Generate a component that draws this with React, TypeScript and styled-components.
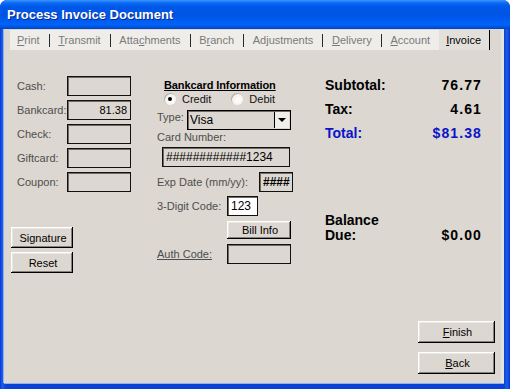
import React from 'react';
import styled, { createGlobalStyle } from 'styled-components';

const GlobalStyle = createGlobalStyle`
  html, body {
    margin: 0;
    padding: 0;
    background: #ffffff;
  }
  body {
    font-family: "Liberation Sans", Arial, sans-serif;
    font-size: 11px;
  }
`;

const FACE = '#dcd7d0';
const LABEL = '#4e4e4e';

const Window = styled.div`
  width: 510px;
  height: 389px;
  display: flex;
  flex-direction: column;
  background: linear-gradient(90deg, #0831d9 0px, #1d5fe6 2px, #0842d6 6px, #0842d6 504px, #1d5fe6 507px, #0831d9 510px);
  border-radius: 7px 7px 0 0;
  overflow: hidden;
`;

const TitleBar = styled.div`
  flex: none;
  height: 29px;
  display: flex;
  align-items: center;
  padding: 0 0 1px 7px;
  box-sizing: border-box;
  background: linear-gradient(
    180deg,
    #3d95ff 0%,
    #0a6cf5 10%,
    #0058e8 22%,
    #0054e3 50%,
    #005bf2 70%,
    #0063f8 85%,
    #0050d8 95%,
    #0040b8 100%
  );
  color: #ffffff;
  font: bold 13px "Liberation Sans", Arial, sans-serif;
  text-shadow: 1px 1px 0 #0a2a8a;
`;

const Client = styled.div`
  flex: 1;
  display: flex;
  flex-direction: column;
  margin: 0 6px 6px 4px;
  background: ${FACE};
  box-shadow: -1px 0 0 #8fb0ee, 0 1px 0 #8fb0ee, inset -3px 0 0 #e6e3de;
`;

const TabStrip = styled.div`
  flex: none;
  display: flex;
  width: 480px;
  height: 20px;
  margin: 1px 0 0 6px;
  background: #efede9;
`;

const Tab = styled.div<{ $first?: boolean }>`
  display: flex;
  align-items: center;
  padding: 0 9px 0 ${p => (p.$first ? '7px' : '9px')};
  color: #7a7a7a;
  font-size: 11px;
`;

const ActiveTab = styled.div`
  display: flex;
  align-items: center;
  padding: 0 8px 0 7px;
  background: #e3e0db;
  border-right: 1px solid #000000;
  color: #000000;
  font-size: 11px;
`;

const TabSep = styled.span`
  align-self: center;
  width: 1px;
  height: 13px;
  background: #2a2a2a;
`;

const Content = styled.div`
  flex: 1;
  display: flex;
  padding: 0 8px 9px 7px;
`;

const LeftCol = styled.div`
  width: 120px;
  display: flex;
  flex-direction: column;
`;

const PayList = styled.div`
  display: flex;
  flex-direction: column;
  gap: 4px;
  margin: 26px 0 0 6px;
`;

const Row = styled.div`
  display: flex;
  align-items: center;
`;

const Label = styled.span<{ $w?: number; $underline?: boolean }>`
  width: ${p => (p.$w ? `${p.$w}px` : 'auto')};
  flex: none;
  color: ${LABEL};
  font-size: 11px;
  text-decoration: ${p => (p.$underline ? 'underline' : 'none')};
`;

const Box = styled.div<{ $w: number; $h?: number; $white?: boolean; $right?: boolean; $bold?: boolean; $size?: number }>`
  width: ${p => p.$w}px;
  height: ${p => p.$h ?? 20}px;
  box-sizing: border-box;
  flex: none;
  display: flex;
  align-items: center;
  justify-content: ${p => (p.$right ? 'flex-end' : 'flex-start')};
  padding: 0 3px;
  border: 1px solid #111111;
  box-shadow: inset 1px 1px 0 #6e6b67;
  background: ${p => (p.$white ? '#ffffff' : 'transparent')};
  color: #000000;
  font-size: ${p => p.$size ?? 12}px;
  font-weight: ${p => (p.$bold ? 'bold' : 'normal')};
  white-space: nowrap;
  overflow: hidden;
`;

const Button = styled.button<{ $w: number; $h: number }>`
  width: ${p => p.$w}px;
  height: ${p => p.$h}px;
  flex: none;
  padding: 0 0 0 2px;
  border: none;
  background: ${FACE};
  box-shadow: inset -1px -1px 0 #000000, inset 1px 1px 0 #ffffff, inset -2px -2px 0 #85817b, inset 2px 2px 0 #ebe8e3;
  color: #000000;
  font: 11px "Liberation Sans", Arial, sans-serif;
  cursor: default;
`;

const ButtonStack = styled.div<{ $gap: number; $mt?: number }>`
  display: flex;
  flex-direction: column;
  gap: ${p => p.$gap}px;
  margin-top: ${p => p.$mt ?? 0}px;
`;

const MidCol = styled.div`
  width: 136px;
  margin-left: 26px;
  display: flex;
  flex-direction: column;
`;

const Heading = styled.div`
  margin: 28px 0 0 7px;
  height: 14px;
  line-height: 14px;
  font-size: 11px;
  font-weight: bold;
  text-decoration: underline;
  color: #000000;
  letter-spacing: -0.1px;
`;

const RadioRow = styled.div`
  display: flex;
  align-items: center;
  height: 14px;
  padding-left: 7px;
`;

const RadioOption = styled.label<{ $gap?: number }>`
  display: flex;
  align-items: center;
  gap: 6px;
  margin-left: ${p => p.$gap ?? 0}px;
  color: #111111;
  font-size: 11px;
`;

const RadioDot = styled.span<{ $checked?: boolean }>`
  width: 12px;
  height: 12px;
  border-radius: 50%;
  display: grid;
  place-items: center;
  background: radial-gradient(circle at 60% 60%, #ffffff 0%, #f4f2ee 55%, #dedad4 100%);
  box-shadow: inset 1px 1px 0 #b5b1aa;

  &::after {
    content: '';
    width: 4px;
    height: 4px;
    border-radius: 50%;
    background: ${p => (p.$checked ? '#000000' : 'transparent')};
  }
`;

const TypeRow = styled.div`
  display: flex;
  align-items: flex-start;
  margin-top: 4px;
`;

const TypeLabel = styled(Label)`
  padding-top: 1px;
`;

const Select = styled.div`
  width: 104px;
  height: 20px;
  box-sizing: border-box;
  display: flex;
  align-items: stretch;
  border: 1px solid #000000;
  box-shadow: inset 1px 1px 0 #6e6b67;
  color: #000000;
  font-size: 12px;
`;

const SelectValue = styled.span`
  flex: 1;
  display: flex;
  align-items: center;
  padding-left: 2px;
`;

const SelectArrow = styled.span`
  width: 14px;
  margin: 1px 1px 1px 0;
  display: grid;
  place-items: center;
  background: #f0eeea;
  border-left: 1px solid #000000;

  &::after {
    content: '';
    border-left: 4px solid transparent;
    border-right: 4px solid transparent;
    border-top: 4px solid #000000;
  }
`;

const FieldLabel = styled.div<{ $mt: number }>`
  margin-top: ${p => p.$mt}px;
  height: 13px;
  line-height: 13px;
  color: ${LABEL};
  font-size: 11px;
`;

const Field = styled.div<{ $mt: number; $ml?: number }>`
  display: flex;
  align-items: center;
  margin-top: ${p => p.$mt}px;
  margin-left: ${p => p.$ml ?? 0}px;
`;

const RightCol = styled.div`
  flex: 1;
  margin-left: 32px;
  display: flex;
  flex-direction: column;
`;

const Summary = styled.div`
  display: flex;
  flex-direction: column;
  gap: 8px;
  margin-top: 27px;
  padding-right: 15px;
`;

const SumRow = styled.div<{ $blue?: boolean }>`
  display: flex;
  justify-content: space-between;
  align-items: center;
  height: 16px;
  color: ${p => (p.$blue ? '#0a14c8' : '#000000')};
  font: bold 14px "Liberation Sans", Arial, sans-serif;
`;

const Amount = styled.span`
  letter-spacing: 1.1px;
  margin-right: -1px;
`;

const Balance = styled.div`
  margin-top: 72px;
  padding-right: 15px;
  display: flex;
  justify-content: space-between;
  align-items: flex-end;
  color: #000000;
  font: bold 14px/15px "Liberation Sans", Arial, sans-serif;
`;

const BalanceLabel = styled.div`
  display: flex;
  flex-direction: column;
`;

const NavButtons = styled(ButtonStack)`
  margin-top: auto;
  align-self: flex-end;
  margin-right: 1px;
`;

export default function App() {
  return (
    <>
      <GlobalStyle />
      <Window>
        <TitleBar>Process Invoice Document</TitleBar>
        <Client>
          <TabStrip>
            <Tab $first><span><u>P</u>rint</span></Tab>
            <TabSep />
            <Tab><span><u>T</u>ransmit</span></Tab>
            <TabSep />
            <Tab><span>Atta<u>c</u>hments</span></Tab>
            <TabSep />
            <Tab><span>B<u>r</u>anch</span></Tab>
            <TabSep />
            <Tab><span>Ad<u>j</u>ustments</span></Tab>
            <TabSep />
            <Tab><span><u>D</u>elivery</span></Tab>
            <TabSep />
            <Tab><span><u>A</u>ccount</span></Tab>
            <ActiveTab><span><u>I</u>nvoice</span></ActiveTab>
          </TabStrip>

          <Content>
            <LeftCol>
              <PayList>
                <Row><Label $w={50}>Cash:</Label><Box $w={64} /></Row>
                <Row><Label $w={50}>Bankcard:</Label><Box $w={64} $right $size={11}>81.38</Box></Row>
                <Row><Label $w={50}>Check:</Label><Box $w={64} /></Row>
                <Row><Label $w={50}>Giftcard:</Label><Box $w={64} /></Row>
                <Row><Label $w={50}>Coupon:</Label><Box $w={64} /></Row>
              </PayList>
              <ButtonStack $gap={4} $mt={35}>
                <Button $w={62} $h={21}>Signature</Button>
                <Button $w={62} $h={21}>Reset</Button>
              </ButtonStack>
            </LeftCol>

            <MidCol>
              <Heading>Bankcard Information</Heading>
              <RadioRow>
                <RadioOption><RadioDot $checked />Credit</RadioOption>
                <RadioOption $gap={20}><RadioDot />Debit</RadioOption>
              </RadioRow>
              <TypeRow>
                <TypeLabel $w={30}>Type:</TypeLabel>
                <Select>
                  <SelectValue>Visa</SelectValue>
                  <SelectArrow />
                </Select>
              </TypeRow>
              <FieldLabel $mt={1}>Card Number:</FieldLabel>
              <Field $mt={3} $ml={5}>
                <Box $w={128}>############1234</Box>
              </Field>
              <Field $mt={5}>
                <Label $w={102}>Exp Date (mm/yy):</Label>
                <Box $w={34} $bold>####</Box>
              </Field>
              <Field $mt={4}>
                <Label $w={70}>3-Digit Code:</Label>
                <Box $w={31} $white>123</Box>
              </Field>
              <Field $mt={5} $ml={70}>
                <Button $w={64} $h={18}>Bill Info</Button>
              </Field>
              <Field $mt={5}>
                <Label $w={70} $underline>Auth Code:</Label>
                <Box $w={64} />
              </Field>
            </MidCol>

            <RightCol>
              <Summary>
                <SumRow><span>Subtotal:</span><Amount>76.77</Amount></SumRow>
                <SumRow><span>Tax:</span><Amount>4.61</Amount></SumRow>
                <SumRow $blue><span>Total:</span><Amount>$81.38</Amount></SumRow>
              </Summary>
              <Balance>
                <BalanceLabel>
                  <span>Balance</span>
                  <span>Due:</span>
                </BalanceLabel>
                <Amount>$0.00</Amount>
              </Balance>
              <NavButtons $gap={9}>
                <Button $w={77} $h={22}><u>F</u>inish</Button>
                <Button $w={77} $h={22}><u>B</u>ack</Button>
              </NavButtons>
            </RightCol>
          </Content>
        </Client>
      </Window>
    </>
  );
}
